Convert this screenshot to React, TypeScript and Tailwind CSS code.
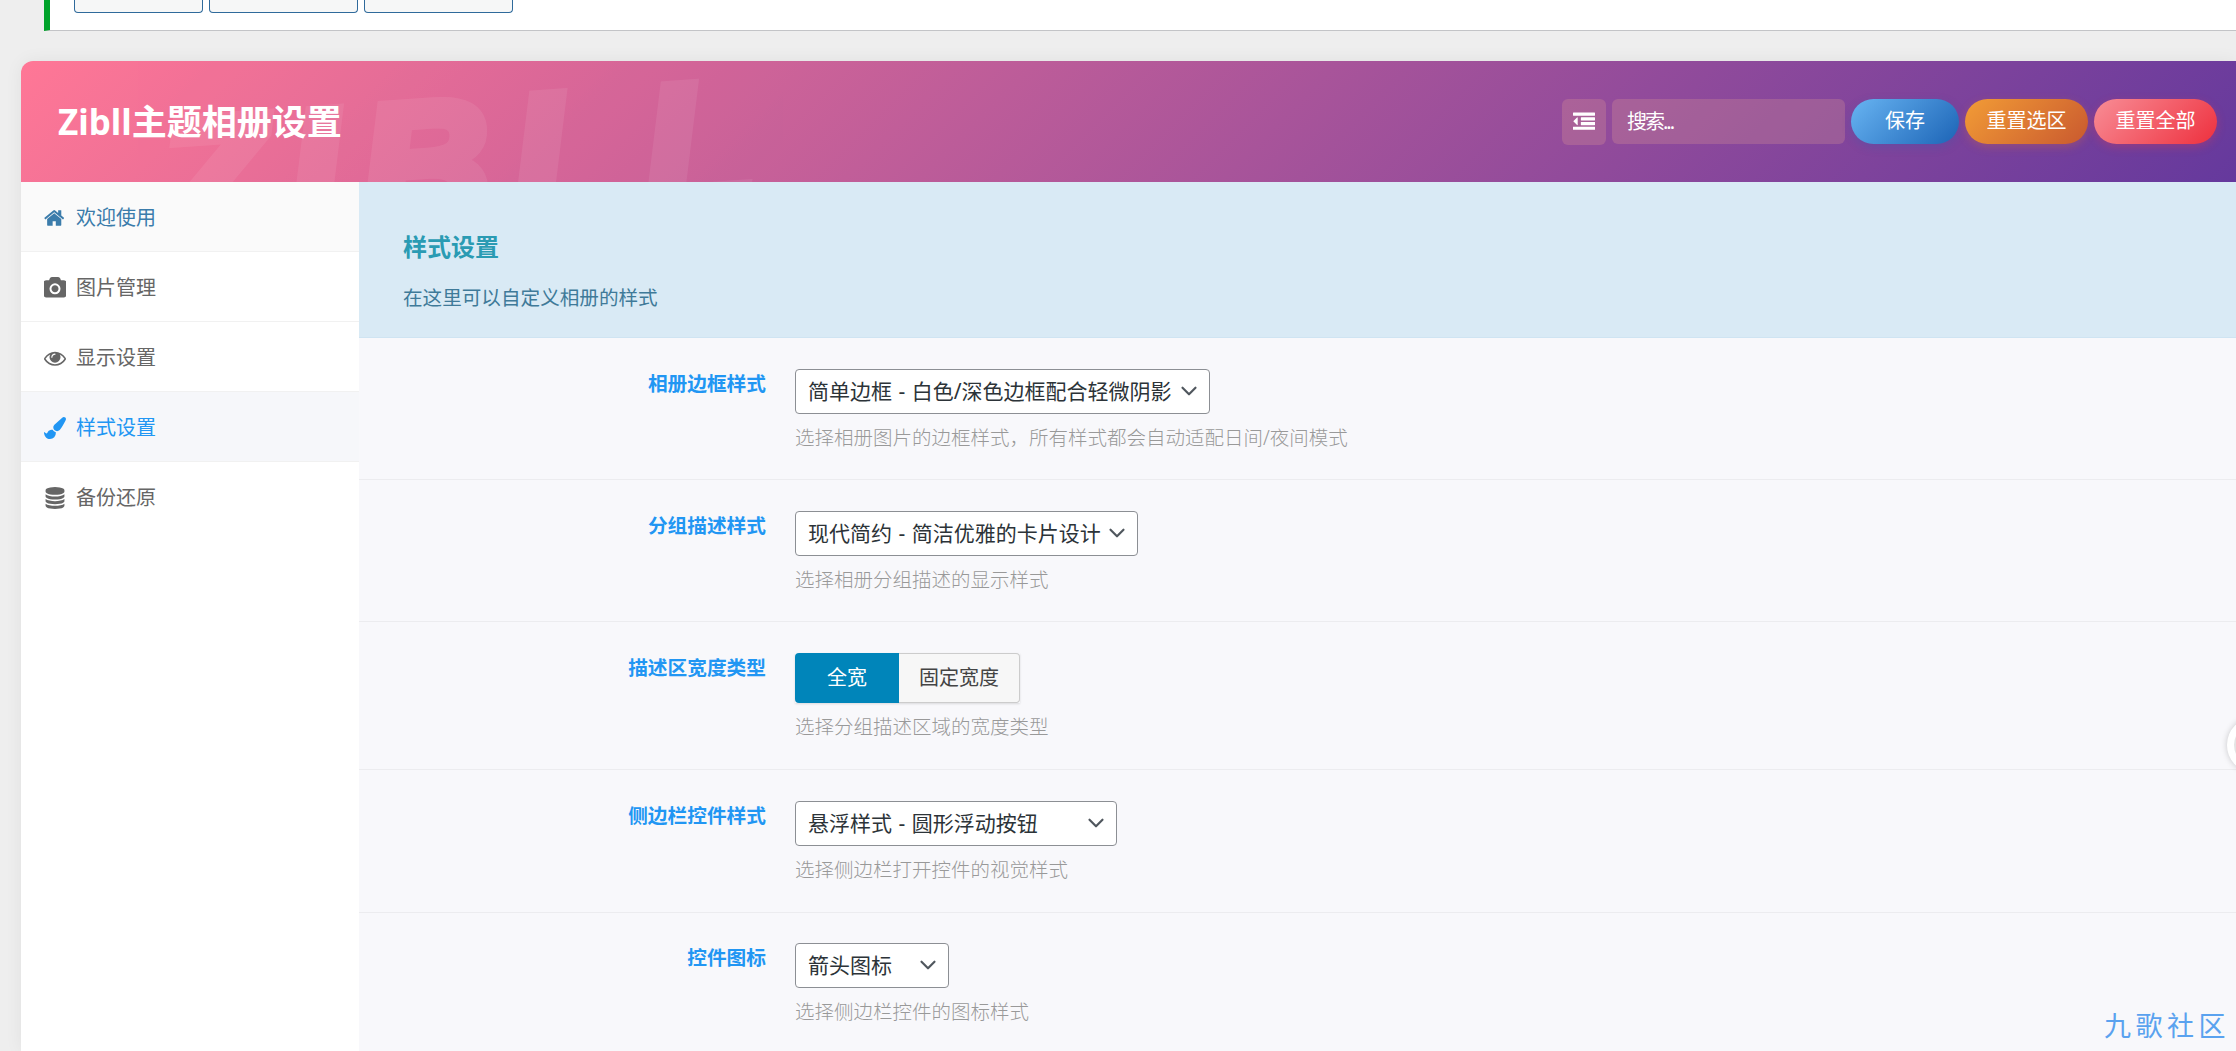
import React from 'react';
import { ChevronDown } from 'lucide-react';

const Fa = ({ d, className }: { d: string; className: string }) => (
  <svg viewBox="0 0 1792 1792" fill="currentColor" className={className}>
    <path d={d} />
  </svg>
);

const icons = {
  home: 'M1408 992v480q0 26-19 45t-45 19h-384v-384h-256v384h-384q-26 0-45-19t-19-45v-480q0-1 .5-3t.5-3l575-474 575 474q1 2 1 6zm223-69l-62 74q-8 9-21 11h-3q-13 0-21-7l-692-577-692 577q-12 8-24 7-13-2-21-11l-62-74q-8-10-7-23.5t11-21.5l719-599q32-26 76-26t76 26l244 204v-195q0-14 9-23t23-9h192q14 0 23 9t9 23v408l219 182q10 8 11 21.5t-7 23.5z',
  camera: 'M896 672q119 0 203.5 84.5t84.5 203.5-84.5 203.5-203.5 84.5-203.5-84.5-84.5-203.5 84.5-203.5 203.5-84.5zm704-416q106 0 181 75t75 181v896q0 106-75 181t-181 75h-1408q-106 0-181-75t-75-181v-896q0-106 75-181t181-75h224l51-136q19-49 69.5-84.5t103.5-35.5h512q53 0 103.5 35.5t69.5 84.5l51 136h224zm-704 1152q185 0 316.5-131.5t131.5-316.5-131.5-316.5-316.5-131.5-316.5 131.5-131.5 316.5 131.5 316.5 316.5 131.5z',
  eye: 'M1664 960q-152-236-381-353 61 104 61 225 0 185-131.5 316.5t-316.5 131.5-316.5-131.5-131.5-316.5q0-121 61-225-229 117-381 353 133 205 333.5 326.5t434.5 121.5 434.5-121.5 333.5-326.5zm-720-384q0-20-14-34t-34-14q-125 0-214.5 89.5t-89.5 214.5q0 20 14 34t34 14 34-14 14-34q0-86 61-147t147-61q20 0 34-14t14-34zm848 384q0 34-20 69-140 230-376.5 368.5t-499.5 138.5-499.5-139-376.5-368q-20-35-20-69t20-69q140-229 376.5-368t499.5-139 499.5 139 376.5 368q20 35 20 69z',
  brush: 'M1615 0q70 0 122.5 46.5t52.5 116.5q0 63-45 151-332 629-465 752-97 91-218 91-126 0-216.5-92.5t-90.5-219.5q0-128 92-212l638-579q59-54 130-54zm-909 1034q39 76 106.5 130t150.5 76l1 71q4 213-129.5 347t-348.5 134q-123 0-218-46.5t-152.5-127.5-86.5-183-29-220q7 5 41 30t62 44.5 59 36.5 46 17q41 0 55-37 25-66 57.5-112.5t69.5-76 88-47.5 103-25.5 125-10.5z',
  database: 'M896 768q237 0 443-43t325-127v170q0 69-103 128t-280 93.5-385 34.5-385-34.5-280-93.5-103-128v-170q119 84 325 127t443 43zm0 768q237 0 443-43t325-127v170q0 69-103 128t-280 93.5-385 34.5-385-34.5-280-93.5-103-128v-170q119 84 325 127t443 43zm0-384q237 0 443-43t325-127v170q0 69-103 128t-280 93.5-385 34.5-385-34.5-280-93.5-103-128v-170q119 84 325 127t443 43zm0-1152q208 0 385 34.5t280 93.5 103 128v128q0 69-103 128t-280 93.5-385 34.5-385-34.5-280-93.5-103-128v-128q0-69 103-128t280-93.5 385-34.5z',
  outdent: 'M384 544v576q0 13-9.5 22.5t-22.5 9.5q-14 0-23-9l-288-288q-9-9-9-23t9-23l288-288q9-9 23-9 13 0 22.5 9.5t9.5 22.5zm1408 768v192q0 13-9.5 22.5t-22.5 9.5h-1728q-13 0-22.5-9.5t-9.5-22.5v-192q0-13 9.5-22.5t22.5-9.5h1728q13 0 22.5 9.5t9.5 22.5zm0-384v192q0 13-9.5 22.5t-22.5 9.5h-1088q-13 0-22.5-9.5t-9.5-22.5v-192q0-13 9.5-22.5t22.5-9.5h1088q13 0 22.5 9.5t9.5 22.5zm0-384v192q0 13-9.5 22.5t-22.5 9.5h-1088q-13 0-22.5-9.5t-9.5-22.5v-192q0-13 9.5-22.5t22.5-9.5h1088q13 0 22.5 9.5t9.5 22.5zm0-384v192q0 13-9.5 22.5t-22.5 9.5h-1728q-13 0-22.5-9.5t-9.5-22.5v-192q0-13 9.5-22.5t22.5-9.5h1728q13 0 22.5 9.5t9.5 22.5z',
};

const navItems = [
  { label: '欢迎使用', icon: icons.home, tone: 'bg-[#fafafa] text-[#3b7cab] border-b border-[#f1f1f1]' },
  { label: '图片管理', icon: icons.camera, tone: 'bg-white text-[#666666] border-b border-[#f1f1f1]' },
  { label: '显示设置', icon: icons.eye, tone: 'bg-white text-[#666666] border-b border-[#f1f1f1]' },
  { label: '样式设置', icon: icons.brush, tone: 'bg-[#f6f7fa] text-[#2196f3] border-b border-[#f1f1f1]' },
  { label: '备份还原', icon: icons.database, tone: 'bg-white text-[#666666]' },
];

const Select = ({ value, width }: { value: string; width: string }) => (
  <div className={`relative h-[45px] ${width}`}>
    <select
      defaultValue={value}
      className="h-full w-full appearance-none rounded-[4px] border border-[#8c8f94] bg-white pl-3 text-[21px] text-[#2c3338] outline-none [word-spacing:1px]"
    >
      <option>{value}</option>
    </select>
    <ChevronDown className="pointer-events-none absolute right-[8px] top-[9px] h-[26px] w-[26px] text-[#50575e]" strokeWidth={2} />
  </div>
);

const Row = ({
  label,
  hint,
  children,
  className = 'pt-[31px] pb-[27px]',
}: {
  label: string;
  hint: string;
  children: React.ReactNode;
  className?: string;
}) => (
  <div className={`flex border-b border-[#ececef] ${className}`}>
    <div className="w-[407px] pt-[1px] text-right text-[19.7px] font-bold leading-[28px] text-[#2196f3]">{label}</div>
    <div className="ml-[29px]">
      {children}
      <p className="mt-[10px] text-[19.5px] font-light leading-[28px] text-[#999999]">{hint}</p>
    </div>
  </div>
);

const App = () => {
  return (
    <div className="relative h-[1051px] w-full overflow-hidden bg-[#eeeeee] font-['Noto_Sans','Noto_Sans_CJK_SC',sans-serif]">
      {/* 顶部通知条，按钮被滚动裁掉了一半 */}
      <div className="ml-[44px] flex h-[31px] gap-[6px] border-b border-l-[6px] border-b-[#c3c4c7] border-l-[#00a32a] bg-white pl-[24px]">
        <div className="h-[13px] w-[129px] rounded-b-[4px] border border-t-0 border-[#2f6a9b] bg-[#f6f7f7]" />
        <div className="h-[13px] w-[149px] rounded-b-[4px] border border-t-0 border-[#2f6a9b] bg-[#f6f7f7]" />
        <div className="h-[13px] w-[149px] rounded-b-[4px] border border-t-0 border-[#2f6a9b] bg-[#f6f7f7]" />
      </div>

      <div className="ml-[21px] mt-[30px] overflow-hidden rounded-tl-[12px] shadow-[0_0_18px_rgba(0,0,0,0.06)]">
        <header className="relative flex h-[121px] items-center justify-between overflow-hidden bg-[linear-gradient(135deg,#ff7796,#65399d)] pl-[37px] pr-[19px]">
          <div className="pointer-events-none absolute left-[135px] top-[12px] -rotate-[4deg] select-none font-['Liberation_Sans',sans-serif] text-[180px] font-bold italic leading-none tracking-[22px] text-white opacity-[0.07] [-webkit-text-stroke:12px_white]">
            ZIBLL
          </div>
          <h1 className="relative pt-[1px] text-[35px] font-bold text-white">Zibll主题相册设置</h1>
          <div className="relative flex gap-[6px] text-[20px] text-white">
            <button className="flex h-[46px] w-[44px] items-center justify-center rounded-[6px] bg-[rgba(255,185,145,0.2)]">
              <Fa d={icons.outdent} className="h-[22px] w-[22px]" />
            </button>
            <input
              placeholder="搜索..."
              className="h-[45px] w-[233px] rounded-[6px] bg-[rgba(255,185,145,0.2)] px-[15px] text-[20px] text-white outline-none placeholder:text-white placeholder:tracking-[-2px]"
            />
            <button className="h-[45px] w-[108px] rounded-full bg-[linear-gradient(135deg,#68b4f2,#1c64b6)] shadow-[0_3px_10px_rgba(30,100,180,0.25)]">保存</button>
            <button className="h-[45px] w-[123px] rounded-full bg-[linear-gradient(135deg,#f29c36,#c9592f)] shadow-[0_3px_10px_rgba(220,110,50,0.3)]">重置选区</button>
            <button className="h-[45px] w-[123px] rounded-full bg-[linear-gradient(135deg,#f88d96,#ee303e)] shadow-[0_3px_10px_rgba(240,60,70,0.3)]">重置全部</button>
          </div>
        </header>

        <div className="flex h-[869px]">
          <nav className="w-[338px] shrink-0 bg-white">
            {navItems.map((item) => (
              <div key={item.label} className={`flex h-[70px] items-center gap-[11px] pl-[23px] pt-[2px] text-[20px] ${item.tone}`}>
                <span className="flex w-[21px] justify-center">
                  <Fa d={item.icon} className="h-[22px] w-[22px] shrink-0" />
                </span>
                {item.label}
              </div>
            ))}
          </nav>

          <main className="flex-1 bg-[#f8f8fb]">
            <section className="border-b border-[#cfe4f2] bg-[#d9eaf5] pb-[25px] pl-[44px] pt-[48px]">
              <h2 className="text-[24px] font-bold leading-[34px] text-[#2a9bb3]">样式设置</h2>
              <p className="mt-[20px] text-[19.6px] leading-[28px] text-[#3f7a99]">在这里可以自定义相册的样式</p>
            </section>

            <Row label="相册边框样式" hint="选择相册图片的边框样式，所有样式都会自动适配日间/夜间模式">
              <Select value="简单边框 - 白色/深色边框配合轻微阴影" width="w-[415px]" />
            </Row>
            <Row label="分组描述样式" hint="选择相册分组描述的显示样式">
              <Select value="现代简约 - 简洁优雅的卡片设计" width="w-[343px]" />
            </Row>
            <Row label="描述区宽度类型" hint="选择分组描述区域的宽度类型" className="pt-[31px] pb-[28px]">
              <div className="flex h-[50px] w-[225px] text-[20px] shadow-[0_1px_2px_rgba(0,0,0,0.12)]">
                <div className="flex w-[104px] items-center justify-center rounded-l-[4px] bg-[#0085ba] text-white">全宽</div>
                <div className="flex flex-1 items-center justify-center rounded-r-[4px] border border-l-0 border-[#cccccc] bg-[#f7f7f7] text-[#444444]">固定宽度</div>
              </div>
            </Row>
            <Row label="侧边栏控件样式" hint="选择侧边栏打开控件的视觉样式" className="pt-[31px] pb-[28px]">
              <Select value="悬浮样式 - 圆形浮动按钮" width="w-[322px]" />
            </Row>
            <Row label="控件图标" hint="选择侧边栏控件的图标样式" className="pt-[30px] pb-[27px]">
              <Select value="箭头图标" width="w-[154px]" />
            </Row>
          </main>
        </div>
      </div>

      {/* 右侧贴边的浮动按钮 */}
      <div className="absolute left-[2227px] top-[717px] h-[56px] w-[56px] rounded-full border-[7px] border-white bg-[#e4e4e4] shadow-[0_0_6px_rgba(0,0,0,0.2)]" />
      <div className="absolute left-[2104px] top-[1007px] text-[27px] leading-[38px] tracking-[4.5px] text-[#5aa2ef]">九歌社区</div>
    </div>
  );
};

export default App;
